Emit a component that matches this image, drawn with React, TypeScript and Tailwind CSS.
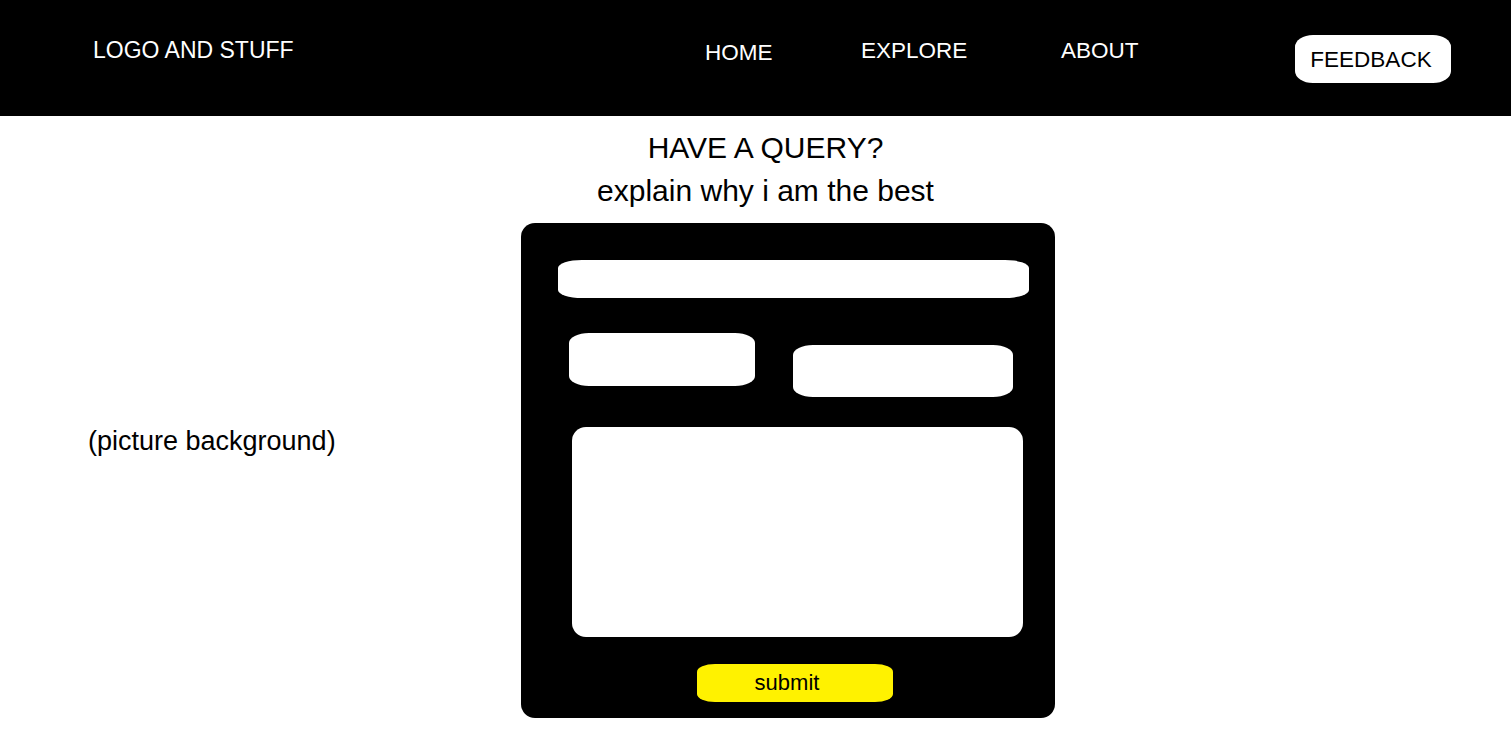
const font = { fontFamily: '"Liberation Sans", Arial, sans-serif' };

function Header() {
  return (
    <header className="flex h-[116px] items-start bg-black pl-[93px] text-[22.5px] text-white" style={font}>
      <div className="mt-[37px] w-[612px] text-[23px] leading-[26px]">LOGO AND STUFF</div>
      <nav className="flex items-start leading-[26px]">
        <a className="mt-[40px] w-[156px]">HOME</a>
        <a className="mt-[38px] w-[200px]">EXPLORE</a>
        <a className="mt-[38px] w-[234px]">ABOUT</a>
      </nav>
      <button className="mt-[35px] flex h-[48px] w-[156px] items-center justify-center rounded-[18px/12px] bg-white pt-[2px] pr-[4px] leading-[26px] text-black">
        FEEDBACK
      </button>
    </header>
  );
}

function QueryForm() {
  return (
    <form className="flex h-[495px] w-[534px] flex-col items-start rounded-[14px] bg-black pt-[37px]">
      {/* name */}
      <div className="ml-[37px] h-[38px] w-[471px] rounded-[24px/8px] bg-white" />
      <div className="mt-[35px] flex items-start">
        <div className="ml-[48px] h-[53px] w-[186px] rounded-[20px/10px] bg-white" />
        <div className="ml-[38px] mt-[12px] h-[52px] w-[220px] rounded-[20px/10px] bg-white" />
      </div>
      {/* message */}
      <div className="ml-[51px] mt-[30px] h-[210px] w-[451px] rounded-[14px] bg-white" />
      <button
        type="button"
        className="ml-[176px] mt-[27px] flex h-[38px] w-[196px] items-center justify-center rounded-[18px/8px] bg-[#fff200] pr-[16px] text-[22px] leading-none text-black"
        style={font}
      >
        submit
      </button>
    </form>
  );
}

export default function App() {
  return (
    <div className="min-h-screen bg-white text-black" style={font}>
      <Header />
      <main>
        <div className="mt-[10px] pl-[20px] text-center text-[30px] leading-[43px]">
          <h1>HAVE A QUERY?</h1>
          <p>explain why i am the best</p>
        </div>
        <div className="mt-[11px] flex items-start">
          <div className="flex h-[437px] w-[521px] items-center pl-[88px] text-[27px]">
            <span>(picture background)</span>
          </div>
          <QueryForm />
        </div>
      </main>
    </div>
  );
}
